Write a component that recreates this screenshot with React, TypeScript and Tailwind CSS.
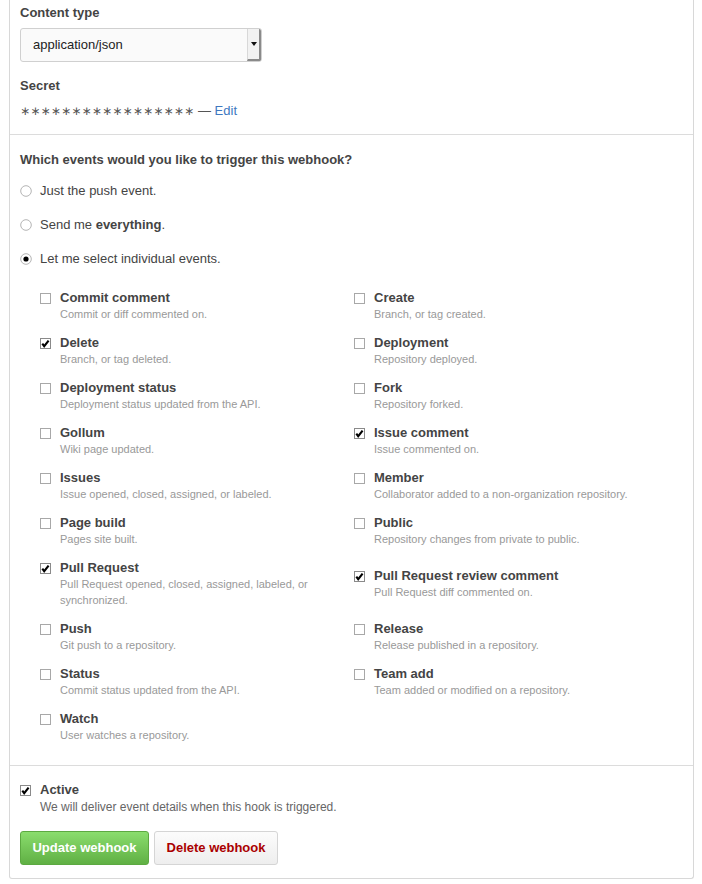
import React from "react";

type HookEvent = { name: string; desc: string; checked?: boolean };

const rows: [HookEvent, HookEvent | null][] = [
  [
    { name: "Commit comment", desc: "Commit or diff commented on." },
    { name: "Create", desc: "Branch, or tag created." },
  ],
  [
    { name: "Delete", desc: "Branch, or tag deleted.", checked: true },
    { name: "Deployment", desc: "Repository deployed." },
  ],
  [
    { name: "Deployment status", desc: "Deployment status updated from the API." },
    { name: "Fork", desc: "Repository forked." },
  ],
  [
    { name: "Gollum", desc: "Wiki page updated." },
    { name: "Issue comment", desc: "Issue commented on.", checked: true },
  ],
  [
    { name: "Issues", desc: "Issue opened, closed, assigned, or labeled." },
    { name: "Member", desc: "Collaborator added to a non-organization repository." },
  ],
  [
    { name: "Page build", desc: "Pages site built." },
    { name: "Public", desc: "Repository changes from private to public." },
  ],
  [
    {
      name: "Pull Request",
      desc: "Pull Request opened, closed, assigned, labeled, or synchronized.",
      checked: true,
    },
    { name: "Pull Request review comment", desc: "Pull Request diff commented on.", checked: true },
  ],
  [
    { name: "Push", desc: "Git push to a repository." },
    { name: "Release", desc: "Release published in a repository." },
  ],
  [
    { name: "Status", desc: "Commit status updated from the API." },
    { name: "Team add", desc: "Team added or modified on a repository." },
  ],
  [{ name: "Watch", desc: "User watches a repository." }, null],
];

function Checkbox({ checked }: { checked?: boolean }) {
  return (
    <svg width="11" height="11" viewBox="0 0 11 11" className="shrink-0">
      <rect x="0.5" y="0.5" width="10" height="10" fill="#fff" stroke={checked ? "#8a8a8a" : "#a8a8a8"} />
      {checked && <path d="M2.3 5.6 L4.2 8.2 L8.6 2.6" fill="none" stroke="#000" strokeWidth="2.1" />}
    </svg>
  );
}

function Radio({ checked }: { checked?: boolean }) {
  return (
    <svg width="12" height="12" viewBox="0 0 12 12" className="shrink-0">
      <circle cx="6" cy="6" r="5.3" fill="#fff" stroke="#b4b4b4" />
      {checked && <circle cx="6" cy="6" r="2.6" fill="#000" />}
    </svg>
  );
}

function EventItem({ ev }: { ev: HookEvent }) {
  return (
    <div className="flex pr-[20px]">
      <div className="w-[20px] shrink-0 pt-[3px]">
        <Checkbox checked={ev.checked} />
      </div>
      <div>
        <div className="text-[13px] leading-[16px] font-bold text-[#444]">{ev.name}</div>
        <div className="text-[11px] leading-[16px] text-[#999]">{ev.desc}</div>
      </div>
    </div>
  );
}

export default function App() {
  return (
    <div className="min-h-screen bg-white pb-[5px]" style={{ fontFamily: '"Liberation Sans", Arial, sans-serif' }}>
      <div className="ml-[9px] w-[685px] border-x border-b border-[#d8d8d8] rounded-b-[3px] text-[#333]">
        {/* webhook settings */}
        <div className="px-[10px] pt-[4px] pb-[14px]">
          <div className="text-[13px] leading-[18px] font-bold text-[#444]">Content type</div>
          <div className="mt-[6px] flex h-[34px] w-[242px] rounded-[3px] border border-[#d0d0d0] bg-[#fafafa] overflow-hidden">
            <div className="flex-1 pl-[12px] text-[13px] leading-[32px] text-[#222]">application/json</div>
            <div className="flex w-[14px] items-center justify-center border-l border-[#d8d8d8] bg-[#f2f2f2] border-r-2 border-b-2 border-r-[#8a8a8a] border-b-[#8a8a8a]">
              <svg width="6" height="4" viewBox="0 0 6 4">
                <path d="M0 0 H6 L3 4 Z" fill="#111" />
              </svg>
            </div>
          </div>
          <div className="mt-[15px] text-[13px] leading-[18px] font-bold text-[#444]">Secret</div>
          <div className="mt-[7px] text-[13px] leading-[18px] text-[#555]">
            <span style={{ fontFamily: '"DejaVu Sans", sans-serif' }} className="text-[12px] tracking-[0.2px]">
              ∗∗∗∗∗∗∗∗∗∗∗∗∗∗∗∗∗
            </span>{" "}
            — <a className="text-[#4078c0]">Edit</a>
          </div>
        </div>

        {/* events */}
        <div className="border-t border-[#dcdcdc] px-[10px] pt-[16px] pb-[22px]">
          <div className="text-[13px] leading-[18px] font-bold text-[#444]">Which events would you like to trigger this webhook?</div>
          <div className="mt-[13px] flex flex-col gap-[16px] text-[13px] leading-[18px] text-[#444]">
            <label className="flex items-center">
              <span className="w-[20px]">
                <Radio />
              </span>
              Just the push event.
            </label>
            <label className="flex items-center">
              <span className="w-[20px]">
                <Radio />
              </span>
              <span>
                Send me <b>everything</b>.
              </span>
            </label>
            <label className="flex items-center">
              <span className="w-[20px]">
                <Radio checked />
              </span>
              Let me select individual events.
            </label>
          </div>
          <div className="mt-[22px] ml-[20px] grid grid-cols-[314px_314px] items-center gap-y-[13px]">
            {rows.map(([a, b], i) => (
              <React.Fragment key={i}>
                <EventItem ev={a} />
                {b ? <EventItem ev={b} /> : <div />}
              </React.Fragment>
            ))}
          </div>
        </div>

        {/* active + actions */}
        <div className="border-t border-[#dcdcdc] px-[10px] pt-[16px] pb-[13px]">
          <div className="flex">
            <div className="w-[20px] shrink-0 pt-[3px]">
              <Checkbox checked />
            </div>
            <div>
              <div className="text-[13px] leading-[16px] font-bold text-[#444]">Active</div>
              <div className="text-[12px] leading-[18px] text-[#666]">We will deliver event details when this hook is triggered.</div>
            </div>
          </div>
          <div className="mt-[15px] flex gap-[5px]">
            <button className="h-[34px] w-[129px] rounded-[3px] border border-[#5ca941] bg-gradient-to-b from-[#8add6d] to-[#60b044] text-[13px] font-bold text-white">
              Update webhook
            </button>
            <button className="h-[34px] w-[124px] rounded-[3px] border border-[#d5d5d5] bg-gradient-to-b from-[#fcfcfc] to-[#eeeeee] text-[13px] font-bold text-[#a00]">
              Delete webhook
            </button>
          </div>
        </div>
      </div>
    </div>
  );
}
